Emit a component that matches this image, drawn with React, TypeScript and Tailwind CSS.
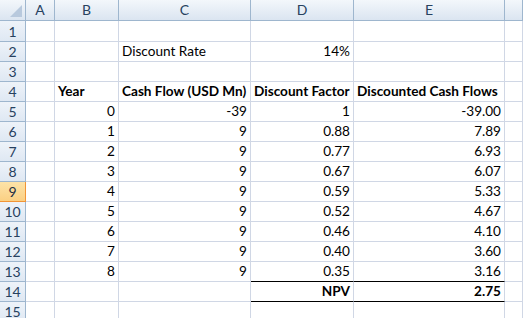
import React from "react";

const cols = ["A", "B", "C", "D", "E", ""];
const widths = "grid-cols-[26px_29px_64px_132px_103px_151px_1fr]";

type Cell = { t?: string; align?: "l" | "r" | "c"; bold?: boolean; bb?: boolean };

const rows: Cell[][] = [
  [{}, {}, {}, {}, {}, {}],
  [{}, {}, { t: "Discount Rate" }, { t: "14%", align: "r" }, {}, {}],
  [{}, {}, {}, {}, {}, {}],
  [
    {},
    { t: "Year", bold: true },
    { t: "Cash Flow (USD Mn)", bold: true },
    { t: "Discount Factor", bold: true },
    { t: "Discounted Cash Flows", bold: true },
    {},
  ],
];

const data: [string, string, string, string][] = [
  ["0", "-39", "1", "-39.00"],
  ["1", "9", "0.88", "7.89"],
  ["2", "9", "0.77", "6.93"],
  ["3", "9", "0.67", "6.07"],
  ["4", "9", "0.59", "5.33"],
  ["5", "9", "0.52", "4.67"],
  ["6", "9", "0.46", "4.10"],
  ["7", "9", "0.40", "3.60"],
  ["8", "9", "0.35", "3.16"],
];

data.forEach((d, i) => {
  const last = i === data.length - 1;
  rows.push([
    {},
    { t: d[0], align: "r" },
    { t: d[1], align: "r" },
    { t: d[2], align: "r", bb: last },
    { t: d[3], align: "r", bb: last },
    {},
  ]);
});
rows.push([{}, {}, {}, { t: "NPV", align: "r", bold: true, bb: true }, { t: "2.75", align: "r", bold: true, bb: true }, {}]);
rows.push([{}, {}, {}, {}, {}, {}]);

export default function App() {
  return (
    <div
      className="w-[523px] h-[318px] overflow-hidden bg-white text-[13.6px] text-black"
      style={{ fontFamily: "Lato, 'Liberation Sans', sans-serif" }}
    >
      <div className={`grid ${widths}`}>
        <div className="h-[21px] border-r border-b border-[#9eb6ce] bg-gradient-to-b from-[#f3f7fb] to-[#dbe5f1] relative">
          <div className="absolute right-[3px] bottom-[3px] w-0 h-0 border-l-[12px] border-l-transparent border-b-[12px] border-b-[#b8c9dd]" />
        </div>
        {cols.map((c, i) => (
          <div
            key={i}
            className="h-[21px] border-r border-b border-[#9eb6ce] bg-gradient-to-b from-[#f3f7fb] to-[#dbe5f1] flex items-center justify-center text-[#27415f] text-[14px] leading-none"
          >
            {c}
          </div>
        ))}
        {rows.map((r, ri) => {
          const sel = ri === 8;
          const h = ri === 0 ? "h-[21px]" : "h-[20px]";
          return (
            <React.Fragment key={ri}>
              <div
                className={`${h} border-r border-b flex items-end justify-center pb-[1px] leading-none text-[14px] ${
                  sel
                    ? "bg-gradient-to-b from-[#fde3a8] to-[#fbd083] border-[#f29536] text-[#1e2f45]"
                    : "bg-gradient-to-b from-[#eef3f9] to-[#dfe8f3] border-[#9eb6ce] text-[#27415f]"
                }`}
              >
                <span className="mb-[1px]">{ri + 1}</span>
              </div>
              {r.map((c, ci) => (
                <div
                  key={ci}
                  className={`${h} border-r border-b flex items-end pb-[2px] px-[3px] leading-none whitespace-nowrap overflow-visible ${
                    c.bb ? "border-b-black" : "border-b-[#d0d7e5]"
                  } border-r-[#d0d7e5] ${c.align === "r" ? "justify-end" : "justify-start"} ${
                    c.bold ? "font-bold" : ""
                  }`}
                >
                  {c.t}
                </div>
              ))}
            </React.Fragment>
          );
        })}
      </div>
    </div>
  );
}
